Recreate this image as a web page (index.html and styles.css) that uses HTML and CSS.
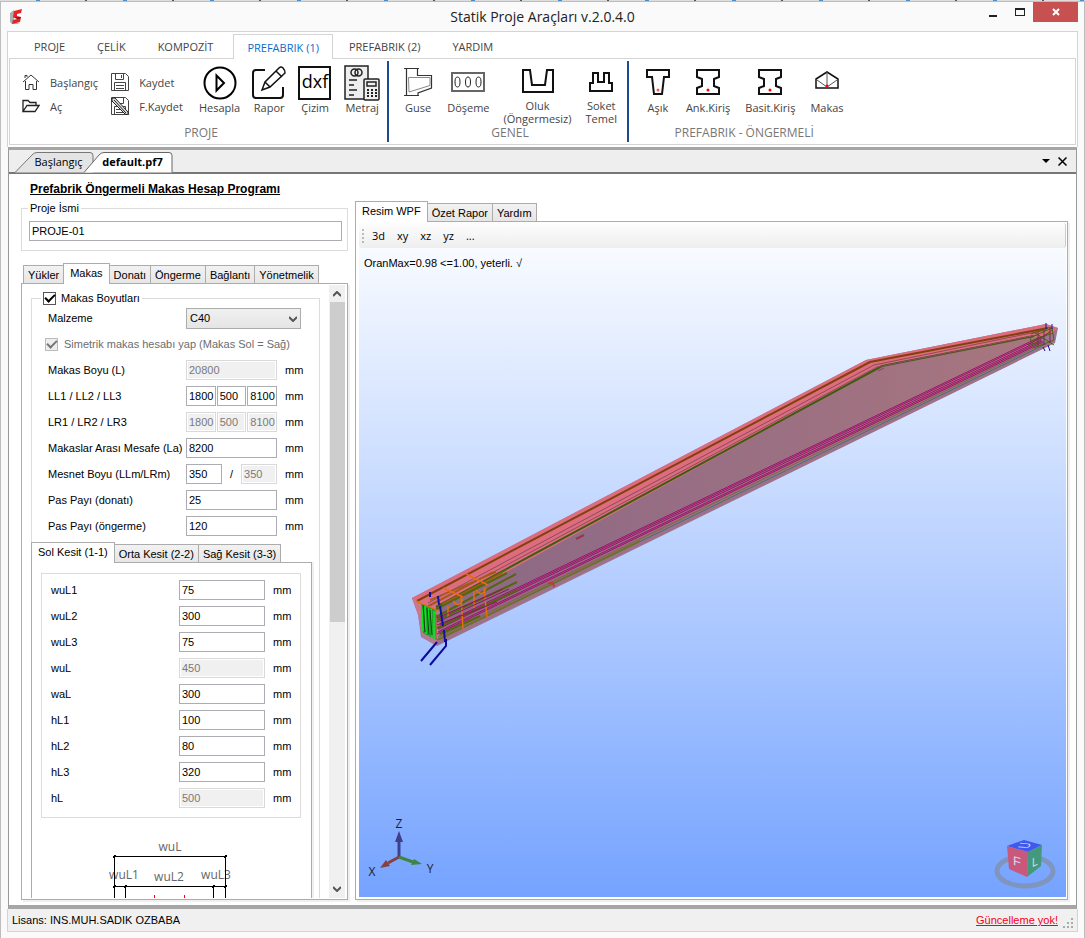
FILE: index.html
```html
<!DOCTYPE html>
<html lang="tr">
<head>
	<meta charset="utf-8">
	<title>Statik Proje Araçları v.2.0.4.0</title>
	<link rel="stylesheet" href="styles.css">
</head>
<body>
<div class="strip"></div>
<div class="window">
	<header class="titlebar">
		<svg class="logo" width="16" height="18" viewBox="0 0 16 18">
			<path d="M1 5l4-3v12l6 2H3l-2-2z" fill="#a9adae"/>
			<path d="M5 3l8-2-1 4-4 1v2l4 1-1 5-8 2 1-4 4-1v-1L4 9z" fill="#e02428"/>
			<path d="M4 9l8 0-1 2-3 0z" fill="#9c1418"/>
		</svg>
		<h1>Statik Proje Araçları v.2.0.4.0</h1>
		<div class="win-buttons">
			<button class="win" aria-label="Minimize"><svg width="8" height="10"><path d="M0 8h8v2H0z" fill="#222"/></svg></button>
			<button class="win" aria-label="Maximize"><svg width="10" height="8"><path d="M0 0h10v8H0zM1 2v5h8V2z" fill="#222" fill-rule="evenodd"/></svg></button>
			<button class="win close" aria-label="Close"><svg width="8" height="8"><path d="M1 1l6 6M7 1L1 7" stroke="#fff" stroke-width="2"/></svg></button>
		</div>
	</header>

	<div class="ribbon">
		<nav class="ribbon-tabs">
			<button>PROJE</button>
			<button>ÇELİK</button>
			<button>KOMPOZİT</button>
			<button class="active">PREFABRIK (1)</button>
			<button>PREFABRIK (2)</button>
			<button>YARDIM</button>
		</nav>
		<div class="ribbon-panel">
			<section class="group first">
				<div class="tools">
					<div class="small-tools">
						<button class="small">
							<svg width="18" height="18" viewBox="0 0 18 18" fill="none" stroke="#333"><path d="M1 9l8-7 8 7M3.5 8v8.500h3.500v-5h4v5h3.500V8M3 5V2.500h2V4"/></svg>
							<span>Başlangıç</span>
						</button>
						<button class="small">
							<svg width="18" height="18" viewBox="0 0 18 18" fill="none" stroke="#222" stroke-width="1.300"><path d="M1 14.500V3.500h5l2 2h6v3M1 14.500l4-6h12l-4 6z"/></svg>
							<span>Aç</span>
						</button>
					</div>
					<div class="small-tools">
						<button class="small">
							<svg width="18" height="18" viewBox="0 0 18 18" fill="none" stroke="#444"><path d="M.5.5h14l3 3v14H.5zM4.500.5v6h8v-6M3.500 17.500v-8h11v8M10.500 2v3M5 12.500h8M5 15.500h8"/></svg>
							<span>Kaydet</span>
						</button>
						<button class="small">
							<svg width="18" height="18" viewBox="0 0 18 18" fill="none" stroke="#444"><path d="M.5.5h14l3 3v14H.5zM4.500.5v6h8v-6M3.500 17.500v-8h11v8M5 12.500h8M5 15.500h8"/><path d="M1 1l3 0 13 14v3l-3-1L1 4z" fill="#ddd" stroke="#222"/><path d="M3 3l12 13" stroke="#222"/></svg>
							<span>F.Kaydet</span>
						</button>
					</div>
					<button class="tool">
						<svg width="34" height="34" viewBox="0 0 34 34" fill="none" stroke="#000" stroke-width="2"><circle cx="17" cy="17" r="15.500"/><path d="M13.500 9.500v15l7.500-7.500z"/></svg>
						<span>Hesapla</span>
					</button>
					<button class="tool">
						<svg width="34" height="34" viewBox="0 0 34 34" fill="none" stroke="#111" stroke-width="2"><path d="M13 4H4a3 3 0 0 0-3 3v22a3 3 0 0 0 3 3h24a3 3 0 0 0 3-3v-8"/><path d="M10 24l3-8L27 2q2-2 4 0t2 5L18 21zM24 5l6 6M13 16l5 5" stroke-width="1.500"/></svg>
						<span>Rapor</span>
					</button>
					<button class="tool">
						<svg width="34" height="34" viewBox="0 0 34 34"><rect x="1" y="1" width="31" height="32" fill="#fff" stroke="#111" stroke-width="2"/><text x="17" y="22" class="dxf">dxf</text></svg>
						<span>Çizim</span>
					</button>
					<button class="tool">
						<svg width="36" height="36" viewBox="0 0 36 36" fill="none" stroke="#222" stroke-width="1.500"><rect x="1" y="1" width="23" height="33" fill="#eee"/><circle cx="10.500" cy="7.500" r="3.500"/><circle cx="14.500" cy="7.500" r="3.500"/><path d="M5 15h8M5 20h5M5 25h8M5 30h5"/><rect x="20" y="14" width="15" height="21" rx="1" fill="#eee"/><rect x="23" y="17" width="9" height="4"/><path d="M23 25h10M23 28h10M23 31h10" stroke-dasharray="2 2" stroke-width="2"/></svg>
						<span>Metraj</span>
					</button>
				</div>
				<h2>PROJE</h2>
			</section>
			<section class="group second">
				<div class="tools">
					<button class="tool">
						<svg width="30" height="30" viewBox="0 0 30 30" fill="none" stroke="#333"><path d="M1 1.500h15M14.500 2v6.500h14V21L15 26v2.500M1 28.500h15M3.500 2v26" stroke-width="1.200"/><path d="M5.500 10.500H27v8L6 25z" stroke="#888"/></svg>
						<span>Guse</span>
					</button>
					<button class="tool">
						<svg width="34" height="30" viewBox="0 0 34 30" fill="none" stroke="#222"><rect x="1" y="6" width="32" height="18" stroke="#666" stroke-width="2"/><ellipse cx="6.500" cy="15" rx="2.500" ry="5"/><ellipse cx="17" cy="15" rx="2.500" ry="5"/><ellipse cx="27.500" cy="15" rx="2.500" ry="5"/></svg>
						<span>Döşeme</span>
					</button>
					<button class="tool">
						<svg width="32" height="30" viewBox="0 0 32 30" fill="none" stroke="#111" stroke-width="2"><path d="M1 3h7l2 15h13l2-15h6v22H1z"/></svg>
						<span class="two-line">Oluk<br>(Öngermesiz)</span>
					</button>
					<button class="tool">
						<svg width="26" height="30" viewBox="0 0 26 30" fill="none" stroke="#111" stroke-width="2"><path d="M5 6h5v9h6V6h5v10h3v8H2v-8h3z"/></svg>
						<span class="two-line">Soket<br>Temel</span>
					</button>
				</div>
				<h2>GENEL</h2>
			</section>
			<section class="group third">
				<div class="tools">
					<button class="tool">
						<svg width="26" height="30" viewBox="0 0 26 30" fill="none" stroke="#111" stroke-width="2"><path d="M2 3h22v7h-5l-2 17H9L7 10H2z"/><circle cx="13" cy="23" r="1.500" fill="#f55" stroke="none"/></svg>
						<span>Aşık</span>
					</button>
					<button class="tool">
						<svg width="26" height="30" viewBox="0 0 26 30" fill="none" stroke="#111" stroke-width="2"><path d="M2 3h22v7l-5 2v7l5 2v6H2v-6l5-2v-7l-5-2z"/><circle cx="13" cy="23" r="1.500" fill="red" stroke="none"/></svg>
						<span>Ank.Kiriş</span>
					</button>
					<button class="tool">
						<svg width="26" height="30" viewBox="0 0 26 30" fill="none" stroke="#111" stroke-width="2"><path d="M2 3h22v7l-5 2v7l5 2v6H2v-6l5-2v-7l-5-2z"/><circle cx="13" cy="23" r="1.500" fill="red" stroke="none"/></svg>
						<span>Basit.Kiriş</span>
					</button>
					<button class="tool">
						<svg width="26" height="30" viewBox="0 0 26 30" fill="none" stroke="#111" stroke-width="1.500"><path d="M2 12l11-7 11 7v9H2z"/><path d="M13 5v15M3 13l10 7 10-7" stroke="#555" stroke-width="1"/><circle cx="13" cy="19" r="1.500" fill="red" stroke="none"/></svg>
						<span>Makas</span>
					</button>
				</div>
				<h2>PREFABRIK - ÖNGERMELİ</h2>
			</section>
		</div>
	</div>

	<main class="document">
		<div class="doc-tabs">
			<button class="doc-tab">
				<svg width="79" height="21"><path d="M0 20.500L17 3Q19 .5 22 .5h53q3 0 3 3v17" fill="#e4e4e4" stroke="#777"/></svg>
				<span>Başlangıç</span>
			</button>
			<button class="doc-tab current">
				<svg width="89" height="21"><path d="M0 20.500L15 3Q17 .5 20 .5h65q3 0 3 3v17" fill="#fff" stroke="#666"/></svg>
				<span>default.pf7</span>
			</button>
			<div class="doc-actions">
				<button aria-label="Windows"><svg width="8" height="4"><path d="M0 0h8L4 4z"/></svg></button>
				<button aria-label="Close document"><svg width="9" height="9"><path d="M.5.5l8 8M8.500.5l-8 8" stroke="#000" stroke-width="1.500"/></svg></button>
			</div>
		</div>
		<div class="workspace">
			<div class="left">
				<h2 class="program">Prefabrik Öngermeli Makas Hesap Programı</h2>
				<fieldset class="project">
					<legend><label for="proje">Proje İsmi</label></legend>
					<input id="proje" type="text" value="PROJE-01">
				</fieldset>
				<div class="tabs main-tabs">
					<button>Yükler</button>
					<button class="active">Makas</button>
					<button>Donatı</button>
					<button>Öngerme</button>
					<button>Bağlantı</button>
					<button>Yönetmelik</button>
				</div>
				<div class="tab-panel">
					<div class="scroll">
						<fieldset class="makas">
							<legend><label class="check"><input type="checkbox" checked> Makas Boyutları</label></legend>
							<div class="row">
								<label for="malzeme">Malzeme</label>
								<span class="select">
									<select id="malzeme"><option>C40</option></select>
									<svg width="8" height="6"><path d="M0 1l4 4 4-4" fill="none" stroke="#555" stroke-width="2"/></svg>
								</span>
							</div>
							<label class="check disabled"><input type="checkbox" checked disabled> Simetrik makas hesabı yap (Makas Sol = Sağ)</label>
							<div class="row"><label for="boy">Makas Boyu (L)</label><span class="fields"><input id="boy" value="20800" disabled></span>mm</div>
							<div class="row"><label for="ll1">LL1 / LL2 / LL3</label><span class="fields"><input id="ll1" value="1800"><input aria-label="LL2" value="500"><input aria-label="LL3" value="8100"></span>mm</div>
							<div class="row"><label for="lr1">LR1 / LR2 / LR3</label><span class="fields"><input id="lr1" value="1800" disabled><input aria-label="LR2" value="500" disabled><input aria-label="LR3" value="8100" disabled></span>mm</div>
							<div class="row"><label for="la">Makaslar Arası Mesafe (La)</label><span class="fields"><input id="la" value="8200"></span>mm</div>
							<div class="row"><label for="llm">Mesnet Boyu (LLm/LRm)</label><span class="fields pair"><input id="llm" value="350">/<input aria-label="LRm" value="350" disabled></span>mm</div>
							<div class="row"><label for="pas1">Pas Payı (donatı)</label><span class="fields"><input id="pas1" value="25"></span>mm</div>
							<div class="row"><label for="pas2">Pas Payı (öngerme)</label><span class="fields"><input id="pas2" value="120"></span>mm</div>
							<div class="tabs sub-tabs">
								<button class="active">Sol Kesit (1-1)</button>
								<button>Orta Kesit (2-2)</button>
								<button>Sağ Kesit (3-3)</button>
							</div>
							<div class="sub-panel">
								<fieldset class="section">
									<div class="row"><label for="wuL1">wuL1</label><input id="wuL1" value="75">mm</div>
									<div class="row"><label for="wuL2">wuL2</label><input id="wuL2" value="300">mm</div>
									<div class="row"><label for="wuL3">wuL3</label><input id="wuL3" value="75">mm</div>
									<div class="row"><label for="wuL">wuL</label><input id="wuL" value="450" disabled>mm</div>
									<div class="row"><label for="waL">waL</label><input id="waL" value="300">mm</div>
									<div class="row"><label for="hL1">hL1</label><input id="hL1" value="100">mm</div>
									<div class="row"><label for="hL2">hL2</label><input id="hL2" value="80">mm</div>
									<div class="row"><label for="hL3">hL3</label><input id="hL3" value="320">mm</div>
									<div class="row"><label for="hL">hL</label><input id="hL" value="500" disabled>mm</div>
								</fieldset>
								<svg class="diagram" width="279" height="120" viewBox="32 818 279 120">
									<g class="dim">
										<text x="170" y="851">wuL</text>
										<text x="124" y="879">wuL1</text>
										<text x="169" y="881">wuL2</text>
										<text x="216" y="879">wuL3</text>
									</g>
									<path d="M114.500 855v80M225.500 855v80M113 856.500h114M113 886.500h114M125.500 885v50M213.500 885v50" stroke="#000" fill="none"/>
									<path d="M113 858l3-3M224 858l3-3M113 888l3-3M124 888l3-3M212 888l3-3M224 888l3-3" stroke="#000"/>
									<path d="M154.500 895v40M184.500 895v40" stroke="red"/>
								</svg>
							</div>
						</fieldset>
					</div>
					<div class="scrollbar">
						<svg width="8" height="6"><path d="M0 5l4-4 4 4" fill="none" stroke="#555" stroke-width="2"/></svg>
						<div class="thumb"></div>
						<svg width="8" height="6"><path d="M0 1l4 4 4-4" fill="none" stroke="#555" stroke-width="2"/></svg>
					</div>
				</div>
			</div>

			<div class="right">
				<div class="tabs">
					<button class="active">Resim WPF</button>
					<button>Özet Rapor</button>
					<button>Yardım</button>
				</div>
				<div class="view-panel">
					<div class="toolbar">
						<span class="grip"></span>
						<button>3d</button><button>xy</button><button>xz</button><button>yz</button><button>...</button>
					</div>
					<div class="viewport">
						<p>OranMax=0.98 &lt;=1.00, yeterli. √</p>
						<svg class="scene" viewBox="359 248 707 649" preserveAspectRatio="xMidYMid meet">
							<defs>
								<linearGradient id="web" x1="0" x2="1">
									<stop offset="0" stop-color="#8b6886"/>
									<stop offset="1" stop-color="#a8767f"/>
								</linearGradient>
							</defs>
							<!-- beam body -->
							<path d="M412 598L866 360l180-36 12 4-3 15L437 646l-16-9-3-23z" fill="#9a7590"/>
							<path d="M412 598L866 360l180-36 12 4-8 7-165 31L442 609l-24 6z" fill="#dd6d7e"/>
							<path d="M435 611L885 365l155-29-2 8L440 640z" fill="url(#web)"/>
							<path d="M412 598l6 16 4 23 15 9 4-36z" fill="#c27e93" opacity=".7"/>
							<!-- top bars -->
							<g fill="none">
								<path d="M417 601L870 362l178-34" stroke="#84400c" stroke-width="2"/>
								<path d="M436 607L882 366l152-30" stroke="#3c5c10" stroke-width="2"/>
								<path d="M428 603L874 365l172-35M430 606L877 367l160-32" stroke="#8c4c5c"/>
							</g>
							<!-- strands along the lower flange -->
							<g fill="none">
								<path d="M440 625L1040 337M439 627L1041 338M438 629L1041 340M438 632L1042 341M437 634L1043 342" stroke="#a0106c"/>
								<path d="M438 637L1044 343" stroke="#86663a"/>
								<path d="M440 639L1046 344" stroke="#44706c"/>
								<path d="M437 640L640 541" stroke="#71721c" stroke-width="1.500"/>
								<path d="M437 643L1052 343" stroke="#a06f88" stroke-width="2"/>
							</g>
							<!-- reinforcement at the support -->
							<g fill="none">
								<path d="M436 609l71-36M436 617l80-43M434 611l73-42M437 620l80-38M437 628l81-38M440 634l40-18" stroke="#55660c" stroke-width="2"/>
								<path d="M428 606l65-34M430 600l66-28M442 604l60-31" stroke="#a15a18" stroke-width="1.500"/>
								<path d="M416 601l22 10M443 588l20 9M466 574l22 11M461 597l2 32M484 588l3 29M474 591v17M448 606v12M453 601q6 8 10-2M476 590q6 8 10-2" stroke="#e56c10" stroke-width="1.500"/>
								<path d="M437 618l66-29M437 622l72-33M437 625l60-23" stroke="#8f1456"/>
								<path d="M548 583l5 0 1 4" stroke="#c03a44" stroke-width="2"/>
								<path d="M576 539l8-4" stroke="#93394f" stroke-width="2"/>
								<path d="M878 371l6-3" stroke="#8c4460"/>
							</g>
							<!-- stirrups on the end face -->
							<path d="M421 604l2 29 11 6 1-29z" fill="#1c9c2c"/>
							<path d="M422 605l1 26M425 606l1 28M428 608l1 28M431 609l1 29M434 611v28" stroke="#0be61c" stroke-width="1.500"/>
							<path d="M423 605l2 27M427 608l2 27M430 610l2 25" stroke="#123c12" stroke-width="1"/>
							<path d="M436 614v26" stroke="#a8502c"/>
							<path d="M430 592v5M438 596l1 9M440 606l3 20M444 630l1 12" stroke="#12129c" stroke-width="2"/>
							<path d="M437 642l-16 19M446 639v7l-16 19" stroke="#0b0b9e" stroke-width="2" fill="none"/>
							<!-- far end -->
							<path d="M1030 338l22-10 2 12-20 8zM1032 331l22 14M1034 345l18-15M1031 334l20-7M1031 341l22-8" fill="none" stroke="#4f6212"/>
							<path d="M1028 345l22-13M1038 332v14M1044 330v15M1050 328v15" stroke="#733442" fill="none"/>
							<path d="M1046 323v6M1052 324v5M1043 347l2 4M1048 345l2 6" stroke="#13138f"/>
							<!-- axes -->
							<path d="M399 857V841" stroke="#40408a" stroke-width="3"/><path d="M399 831l4 11h-8z" fill="#40408a"/>
							<path d="M399 857l-11 6" stroke="#854040" stroke-width="3"/><path d="M380 868l6-8 4 6z" fill="#854040"/>
							<path d="M399 857l14 5" stroke="#3f8440" stroke-width="3"/><path d="M422 864l-11 1 3-6z" fill="#3f8440"/>
							<g class="axis">
								<text x="399" y="828">Z</text>
								<text x="372" y="876">X</text>
								<text x="430" y="873">Y</text>
							</g>
							<!-- view cube -->
							<ellipse cx="1025" cy="871" rx="28" ry="15" fill="none" stroke="#8095be" stroke-width="5"/>
							<path d="M1007 846l17-6 18 5-14 7z" fill="#4058f0"/>
							<path d="M1007 846l21 6-1 25-18-8z" fill="#c8587c"/>
							<path d="M1028 852l14-7-1 21-14 11z" fill="#42997c"/>
							<g class="cube">
								<text transform="matrix(1 .3 0 1 1017 866)">F</text>
								<text transform="matrix(.8 -.4 0 1 1035 866)">L</text>
								<text transform="matrix(.3 -.6 1.200 .1 1030 846)">U</text>
							</g>
						</svg>
					</div>
				</div>
			</div>
		</div>
	</main>

	<footer class="status">
		<span>Lisans: INS.MUH.SADIK OZBABA</span>
		<a href="#">Güncelleme yok!</a>
		<svg width="11" height="11" fill="#aaa"><path d="M8 0h2v2H8zM8 4h2v2H8zM4 4h2v2H4zM0 8h2v2H0zM4 8h2v2H4zM8 8h2v2H8z"/></svg>
	</footer>
</div>
</body>
</html>
```

FILE: styles.css
```css
* {
	box-sizing: border-box;
}
body {
	margin: 0;
	height: 100vh;
	display: flex;
	flex-direction: column;
	font: 11px "Liberation Sans", Arial, sans-serif;
	color: #000;
	background: #fafafa;
}
button, input, select {
	font: inherit;
	color: inherit;
	margin: 0;
}
button {
	border: 0;
	padding: 0;
	background: none;
	white-space: nowrap;
}
h1, h2, p {
	margin: 0;
	font-weight: normal;
}
svg {
	display: block;
	flex: none;
}
.strip {
	height: 1px;
	background: repeating-linear-gradient(90deg, #ddd 0 36px, #4a8ccc 36px 40px, #ddd 40px 85px, #555 85px 87px);
}
.window {
	flex: 1;
	min-height: 0;
	display: flex;
	flex-direction: column;
	padding: 0 6px 6px 7px;
	border: 1px solid #bdbdbd;
	border-width: 1px 1px 0 0;
	box-shadow: inset 1px 0 0 #bdbdbd;
}

/* title bar */
.titlebar {
	position: relative;
	height: 29px;
	flex: none;
}
.titlebar h1 {
	font: 14px/29px "Open Sans", sans-serif;
	text-align: center;
	color: #222;
}
.logo {
	position: absolute;
	left: 2px;
	top: 6px;
}
.win-buttons {
	position: absolute;
	right: 0;
	top: 0;
	display: flex;
}
.win {
	width: 27px;
	height: 20px;
	display: flex;
	align-items: center;
	justify-content: center;
}
.close {
	width: 45px;
	background: #c75050;
}

/* ribbon */
.ribbon {
	flex: none;
	border: 1px solid #d4d4d4;
	border-bottom: 0;
	background: #fff;
	padding: 2px 1px;
}
.ribbon-tabs {
	display: flex;
	padding-left: 9px;
	font: 11px "Open Sans", sans-serif;
	color: #444;
}
.ribbon-tabs button {
	height: 24px;
	padding: 0 15px;
	border: 1px solid transparent;
	border-bottom: 0;
}
.ribbon-tabs .active {
	height: 25px;
	padding: 0 13px;
	margin: 0 0 -1px 4px;
	border-color: #d4d4d4;
	background: #fff;
	color: #0b6ccb;
}
.ribbon-panel {
	display: flex;
	height: 87px;
	border: 1px solid #d4d4d4;
	padding: 2px 0;
	font: 11px/13px "Open Sans", sans-serif;
	color: #444;
}
.group {
	display: flex;
	flex-direction: column;
	justify-content: space-between;
	border-right: 2px solid #1c4b93;
}
.first {
	padding: 0 7px 0 12px;
}
.second {
	padding: 0 10px 0 14px;
}
.third {
	padding: 0 16px;
	border: 0;
}
.group h2 {
	font: 12px/18px "Open Sans", sans-serif;
	text-align: center;
	color: #777;
}
.tools {
	display: flex;
	gap: 12px;
	height: 62px;
}
.second .tools {
	gap: 14px;
}
.third .tools {
	gap: 15px;
}
.small-tools {
	display: flex;
	flex-direction: column;
	gap: 6px;
	margin-right: 4px;
	padding-top: 12px;
}
.small-tools:first-child {
	margin-right: 1px;
}
.small {
	display: flex;
	align-items: center;
	gap: 10px;
	height: 18px;
}
.tool {
	display: flex;
	flex-direction: column;
	align-items: center;
	padding-top: 4px;
}
.tool svg {
	height: 36px;
}
.second .tool svg, .third .tool svg {
	height: 34px;
}
.second .tool span, .third .tool span {
	margin-top: 2px;
}
.second .tool .two-line {
	margin-top: 0;
}
.dxf {
	font: 18px "Open Sans", sans-serif;
	text-anchor: middle;
}

/* document area */
.document {
	flex: 1;
	min-height: 0;
	display: flex;
	flex-direction: column;
	margin: 0 1px;
	border: 1px solid #999;
	border-width: 3px 1px 4px;
	border-color: #a6a6a6 #999;
	background: #fff;
}
.doc-tabs {
	flex: none;
	display: flex;
	align-items: flex-end;
	height: 24px;
	padding: 0 9px 0 6px;
	border-bottom: 2px solid #777;
	background: #eee;
}
.doc-tab {
	position: relative;
	width: 79px;
	height: 20px;
	padding: 0 0 2px 8px;
	font: 11px "Open Sans", sans-serif;
}
.doc-tab svg {
	position: absolute;
	left: 0;
	top: 0;
}
.doc-tab span {
	position: relative;
}
.current {
	width: 89px;
	margin-left: -10px;
	font-weight: bold;
}
.doc-actions {
	display: flex;
	align-items: center;
	gap: 8px;
	margin-left: auto;
	height: 22px;
}
.workspace {
	flex: 1;
	min-height: 0;
	display: flex;
	gap: 7px;
	padding: 8px 8px 5px 12px;
}
.left {
	flex: 0 0 327px;
	display: flex;
	flex-direction: column;
}
.right {
	flex: 1;
	min-width: 0;
	display: flex;
	flex-direction: column;
	padding-top: 18px;
}
.program {
	padding-left: 9px;
	font-size: 12px;
	font-weight: bold;
	text-decoration: underline;
	line-height: 14px;
}
fieldset {
	margin: 0;
	padding: 0;
	border: 1px solid #dcdcdc;
	min-width: 0;
}
legend {
	padding: 0 2px;
	line-height: 14px;
}
.project {
	height: 50px;
	margin: 5px 0 11px;
	padding: 6px 5px 0 7px;
}
.project legend {
	margin-left: -1px;
}
input:not([type=checkbox]) {
	width: 100%;
	min-width: 0;
	height: 20px;
	padding: 0 0 0 2px;
	border: 1px solid #abadb3;
	background: #fff;
}
input:disabled:not([type=checkbox]) {
	border-color: #d9d9d9;
	background: #f0f0f0;
	box-shadow: inset 0 0 0 1px #fff;
	color: #7a7a7a;
}

/* tabs */
.tabs {
	flex: none;
	display: flex;
	align-items: flex-end;
	height: 21px;
}
.tabs button {
	height: 18px;
	padding: 0 4px;
	border: 1px solid #acacac;
	border-bottom: 0;
	background: linear-gradient(#f2f2f2, #e6e6e6);
}
.tabs button + button {
	margin-left: -1px;
}
.tabs .active {
	position: relative;
	height: 21px;
	padding: 0 6px 2px;
	margin-bottom: -1px;
	background: #fff;
}
.main-tabs {
	padding-left: 2px;
}
.tab-panel {
	flex: 1;
	min-height: 0;
	display: flex;
	border: 1px solid #acacac;
	box-shadow: 2px 2px 0 #f0f0f0;
	padding: 1px 2px;
}
.scroll {
	flex: 1;
	overflow-y: scroll;
	scrollbar-width: none;
	padding: 6px 9px 0 7px;
}
.scrollbar {
	width: 16px;
	display: flex;
	flex-direction: column;
	align-items: center;
	justify-content: space-between;
	padding: 6px 0;
	background: #f0f0f0;
}
.thumb {
	width: 15px;
	height: 320px;
	margin: 5px 0 auto;
	background: #cdcdcd;
}

/* Makas form */
.makas legend {
	margin-left: 9px;
}
.check {
	display: flex;
	align-items: center;
	gap: 5px;
}
.check input {
	appearance: none;
	width: 13px;
	height: 13px;
	border: 1px solid #555;
	background: #fff;
	display: grid;
	place-items: center;
}
.check input:checked::before {
	content: "";
	width: 8px;
	height: 4px;
	border: 2px solid #000;
	border-width: 0 0 2px 2px;
	transform: translateY(-1px) rotate(-45deg);
}
.check.disabled {
	height: 26px;
	padding-left: 13px;
	gap: 6px;
	color: #6d6d6d;
}
.check.disabled input {
	border-color: #bbb;
	background: #eee;
}
.check.disabled input::before {
	border-color: #777;
}
.row {
	display: grid;
	grid-template-columns: 131px 92px 1fr;
	gap: 7px;
	align-items: center;
	height: 26px;
	padding-left: 16px;
	white-space: nowrap;
}
.fields {
	display: flex;
	gap: 1px;
	padding-right: 1px;
}
.fields.pair {
	align-items: center;
	gap: 8px;
}
.select {
	position: relative;
	width: 115px;
}
.select select {
	appearance: none;
	width: 100%;
	height: 21px;
	padding: 0 3px;
	border: 1px solid #acacac;
	border-radius: 0;
	background: linear-gradient(#f0f0f0, #e5e5e5);
}
.select svg {
	position: absolute;
	right: 4px;
	top: 8px;
}
.sub-tabs {
	height: 23px;
	margin-left: -1px;
}
.sub-panel {
	width: 281px;
	margin-left: -1px;
	padding-top: 10px;
	border: 1px solid #acacac;
	box-shadow: 2px 0 0 #f0f0f0;
}
.section {
	margin: 0 10px 0 9px;
	padding: 3px 0 6px;
}
.section .row {
	grid-template-columns: 120px 86px 1fr;
	gap: 8px;
	padding-left: 9px;
}
.dim {
	font: 12px "Open Sans", sans-serif;
	text-anchor: middle;
	fill: #666;
}

/* 3D view */
.view-panel {
	flex: 1;
	min-height: 0;
	display: flex;
	flex-direction: column;
	border: 1px solid #acacac;
	box-shadow: 2px 2px 0 #f0f0f0;
	padding: 1px 1px 2px 3px;
}
.toolbar {
	flex: none;
	display: flex;
	align-items: center;
	gap: 12px;
	height: 25px;
	padding-left: 3px;
	border-right: 1px solid #ccc;
	border-radius: 3px;
	background: linear-gradient(#fdfdfd, #eee);
	font: 11px "Open Sans", sans-serif;
}
.grip {
	width: 2px;
	height: 14px;
	margin-right: -4px;
	background: repeating-linear-gradient(#bbb 0 2px, transparent 2px 4px);
}
.viewport {
	position: relative;
	flex: 1;
	min-height: 0;
	background: linear-gradient(#f8fbff, #75a3ff);
}
.viewport p {
	position: absolute;
	left: 5px;
	top: 9px;
}
.scene {
	width: 100%;
	height: 100%;
}
.axis {
	font: 12px "Open Sans", sans-serif;
	text-anchor: middle;
	fill: #222;
}
.cube {
	font: 13px "Liberation Sans", sans-serif;
	text-anchor: middle;
	fill: #d5d8f0;
}

/* status bar */
.status {
	flex: none;
	display: flex;
	align-items: center;
	height: 23px;
	padding: 0 3px 0 4px;
	border: 1px solid #d4d4d4;
	border-top: 0;
	background: #f0f0f0;
}
.status a {
	margin: 0 5px 0 auto;
	color: #f00020;
}
.status svg {
	align-self: flex-end;
	margin-bottom: 2px;
}
```
